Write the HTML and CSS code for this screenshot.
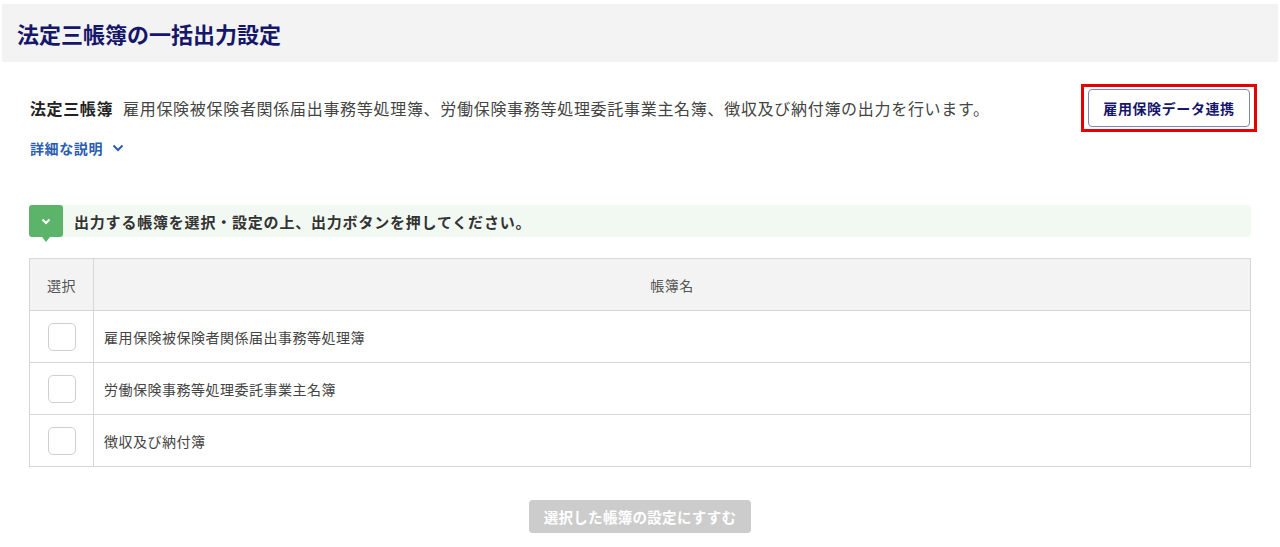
FILE: index.html
```html
<!DOCTYPE html>
<html lang="ja">
<head>
<meta charset="UTF-8">
<title>法定三帳簿の一括出力設定</title>
<link rel="stylesheet" href="styles.css">
</head>
<body>

<div class="page-header">
  <h1>法定三帳簿の一括出力設定</h1>
</div>

<div class="content">
  <div class="desc-row">
    <p class="desc"><strong>法定三帳簿</strong>雇用保険被保険者関係届出事務等処理簿、労働保険事務等処理委託事業主名簿、徴収及び納付簿の出力を行います。</p>
    <div class="highlight">
      <button class="link-btn">雇用保険データ連携</button>
    </div>
  </div>

  <a class="detail-link" href="#">詳細な説明
    <svg width="12" height="8" viewBox="0 0 12 8"><path d="M1.5 1.5 L6 6 L10.5 1.5" fill="none" stroke="#2a5db0" stroke-width="2"/></svg>
  </a>

  <div class="notice">
    <span class="notice-icon">
      <svg width="10" height="7" viewBox="0 0 10 7"><path d="M1.5 1.5 L5 5 L8.5 1.5" fill="none" stroke="#fff" stroke-width="2"/></svg>
    </span>
    <span class="notice-text">出力する帳簿を選択・設定の上、出力ボタンを押してください。</span>
  </div>

  <table class="book-table">
    <thead>
      <tr>
        <th class="col-select">選択</th>
        <th>帳簿名</th>
      </tr>
    </thead>
    <tbody>
      <tr>
        <td class="col-select"><span class="checkbox"></span></td>
        <td>雇用保険被保険者関係届出事務等処理簿</td>
      </tr>
      <tr>
        <td class="col-select"><span class="checkbox"></span></td>
        <td>労働保険事務等処理委託事業主名簿</td>
      </tr>
      <tr>
        <td class="col-select"><span class="checkbox"></span></td>
        <td>徴収及び納付簿</td>
      </tr>
    </tbody>
  </table>

  <div class="actions">
    <button class="next-btn" disabled>選択した帳簿の設定にすすむ</button>
  </div>
</div>

</body>
</html>
```

FILE: styles.css
```css
* {
  box-sizing: border-box;
}
body {
  margin: 0;
  background: #ffffff;
  font-family: "Noto Sans CJK JP", "Noto Sans", sans-serif;
  color: #333;
}
.page-header {
  margin: 4px 2px 0;
  height: 58px;
  background: #f3f3f3;
  display: flex;
  align-items: center;
  padding-left: 15px;
}
.page-header h1 {
  margin: 0;
  font-size: 22px;
  font-weight: bold;
  color: #16166a;
  line-height: 1;
}
.content {
  padding: 0 29px;
}
.desc-row {
  margin-top: 22px;
  display: flex;
  align-items: center;
  justify-content: space-between;
}
.desc {
  margin: 0 0 0 1px;
  font-size: 16px;
  letter-spacing: 0.7px;
  color: #444;
}
.desc strong {
  color: #222;
  letter-spacing: 0.6px;
  margin-right: 10px;
}
.highlight {
  border: 3px solid #e60000;
  padding: 2px 4px;
  margin-right: -6px;
}
.link-btn {
  display: block;
  width: 162px;
  height: 38px;
  background: #fff;
  border: 1px solid #8585b0;
  border-radius: 4px;
  font-family: inherit;
  font-size: 14px;
  font-weight: bold;
  letter-spacing: 0.6px;
  color: #16166a;
  cursor: pointer;
}
.detail-link {
  margin: 6px 0 0 1px;
  display: inline-flex;
  align-items: center;
  gap: 9px;
  height: 20px;
  font-size: 14px;
  font-weight: bold;
  letter-spacing: 0.6px;
  color: #2a5db0;
  text-decoration: none;
}
.notice {
  margin-top: 46px;
  height: 32px;
  background: #f2f9f2;
  border-radius: 4px;
  display: flex;
  align-items: center;
}
.notice-icon {
  position: relative;
  width: 34px;
  height: 32px;
  background: #5cb46a;
  border-radius: 3px;
  display: flex;
  align-items: center;
  justify-content: center;
  flex-shrink: 0;
}
.notice-icon::after {
  content: "";
  position: absolute;
  left: 13px;
  bottom: -5px;
  border-left: 4px solid transparent;
  border-right: 4px solid transparent;
  border-top: 5px solid #5cb46a;
}
.notice-text {
  margin-left: 11px;
  font-size: 15px;
  font-weight: bold;
  letter-spacing: 0.8px;
  color: #333;
}
.book-table {
  margin-top: 21px;
  width: 100%;
  border-collapse: collapse;
  border: 1px solid #cccccc;
  font-size: 14px;
  letter-spacing: 0.5px;
}
.book-table th,
.book-table td {
  border: 1px solid #d6d6d6;
  height: 52px;
  padding: 0 10px;
  text-align: left;
  font-weight: normal;
}
.book-table th {
  background: #f3f3f3;
  text-align: center;
  color: #555;
}
.book-table td {
  color: #444;
}
.book-table .col-select {
  width: 64px;
  text-align: center;
  padding: 0;
}
.checkbox {
  display: inline-block;
  width: 28px;
  height: 28px;
  border: 1px solid #cfcfcf;
  border-radius: 5px;
  background: #fff;
  vertical-align: middle;
}
.actions {
  margin-top: 33px;
  display: flex;
  justify-content: center;
}
.next-btn {
  width: 222px;
  height: 33px;
  background: #cccccc;
  border: none;
  border-radius: 4px;
  font-family: inherit;
  font-size: 14.5px;
  font-weight: bold;
  color: #fff;
  letter-spacing: 0.3px;
}
```
